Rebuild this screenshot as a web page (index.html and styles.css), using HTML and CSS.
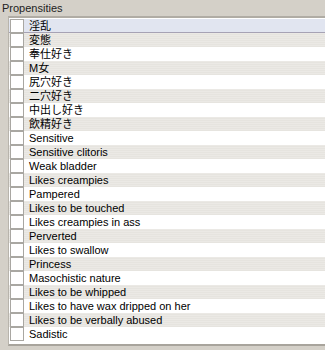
FILE: index.html
```html
<!DOCTYPE html>
<html>
<head>
<meta charset="utf-8">
<link rel="stylesheet" href="styles.css">
</head>
<body>
<div class="panel">
  <div class="title">Propensities</div>
  <div class="listwrap">
    <div class="list">
      <div class="row sel"><span class="cb"></span><span class="lbl">淫乱</span></div>
      <div class="row"><span class="cb"></span><span class="lbl">変態</span></div>
      <div class="row"><span class="cb"></span><span class="lbl">奉仕好き</span></div>
      <div class="row"><span class="cb"></span><span class="lbl">M女</span></div>
      <div class="row"><span class="cb"></span><span class="lbl">尻穴好き</span></div>
      <div class="row"><span class="cb"></span><span class="lbl">二穴好き</span></div>
      <div class="row"><span class="cb"></span><span class="lbl">中出し好き</span></div>
      <div class="row"><span class="cb"></span><span class="lbl">飲精好き</span></div>
      <div class="row"><span class="cb"></span><span class="lbl">Sensitive</span></div>
      <div class="row"><span class="cb"></span><span class="lbl">Sensitive clitoris</span></div>
      <div class="row"><span class="cb"></span><span class="lbl">Weak bladder</span></div>
      <div class="row"><span class="cb"></span><span class="lbl">Likes creampies</span></div>
      <div class="row"><span class="cb"></span><span class="lbl">Pampered</span></div>
      <div class="row"><span class="cb"></span><span class="lbl">Likes to be touched</span></div>
      <div class="row"><span class="cb"></span><span class="lbl">Likes creampies in ass</span></div>
      <div class="row"><span class="cb"></span><span class="lbl">Perverted</span></div>
      <div class="row"><span class="cb"></span><span class="lbl">Likes to swallow</span></div>
      <div class="row"><span class="cb"></span><span class="lbl">Princess</span></div>
      <div class="row"><span class="cb"></span><span class="lbl">Masochistic nature</span></div>
      <div class="row"><span class="cb"></span><span class="lbl">Likes to be whipped</span></div>
      <div class="row"><span class="cb"></span><span class="lbl">Likes to have wax dripped on her</span></div>
      <div class="row"><span class="cb"></span><span class="lbl">Likes to be verbally abused</span></div>
      <div class="row"><span class="cb"></span><span class="lbl">Sadistic</span></div>
    </div>
  </div>
</div>
</body>
</html>
```

FILE: styles.css
```css
html, body {
  margin: 0;
  padding: 0;
  background: #d4d0c8;
  width: 325px;
  height: 350px;
  overflow: hidden;
}
.panel {
  font-family: Tahoma, "Liberation Sans", "Noto Sans CJK JP", sans-serif;
  font-size: 11px;
  color: #000;
}
.title {
  height: 16px;
  line-height: 16px;
  padding-left: 2px;
  color: #222;
}
.listwrap {
  margin-left: 8px;
  border-top: 2px solid #b0aca4;
  border-left: 1px solid #b8b4ac;
  border-bottom: 2px solid #a8a49c;
  background: #fff;
  padding-top: 1px;
  padding-bottom: 3px;
}
.list {
  display: flex;
  flex-direction: column;
}
.row {
  height: 14px;
  display: flex;
  align-items: center;
  background: #fff;
}
.row:nth-child(even) {
  background: repeating-linear-gradient(to bottom, #ebe9e5 0 1px, #e6e4df 1px 2px);
}
.row.sel {
  background: #e1e5f0;
  border-bottom: 1px solid #a6a2b4;
  height: 13px;
}
.cb {
  width: 14px;
  height: 14px;
  box-sizing: border-box;
  border: 1px solid #a9a7a2;
  background: #fff;
  margin-left: 1px;
  flex: none;
}
.lbl {
  margin-left: 5px;
  white-space: nowrap;
  line-height: 14px;
}
```
